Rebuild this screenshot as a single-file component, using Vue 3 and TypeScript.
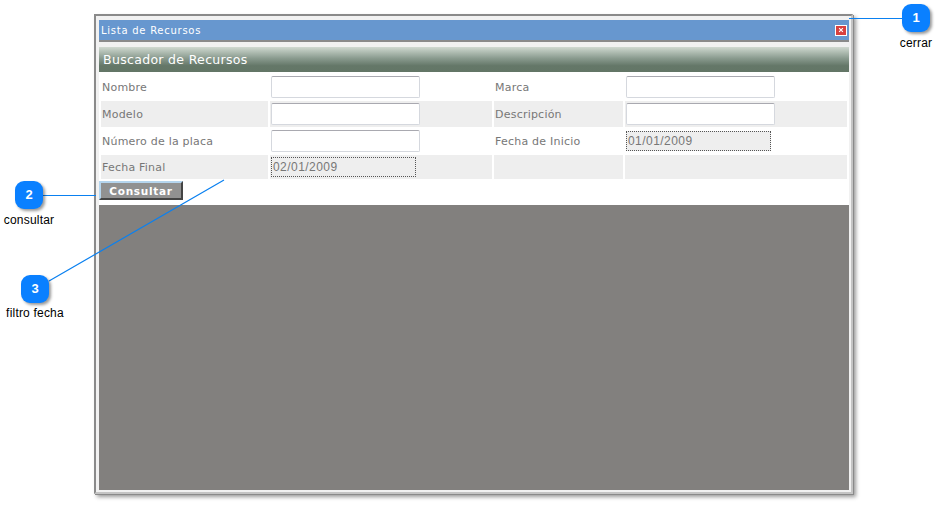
<script setup lang="ts">
interface Callout { n: number; label: string; bx: number; by: number; lx: number; ly: number; lw: number }
const callouts: Callout[] = [
  { n: 1, label: 'cerrar', bx: 902, by: 4, lx: 886, ly: 36, lw: 60 },
  { n: 2, label: 'consultar', bx: 15, by: 181, lx: 0, ly: 213, lw: 58 },
  { n: 3, label: 'filtro fecha', bx: 21, by: 275, lx: 0, ly: 306, lw: 70 },
]
</script>

<template>
  <div class="page">
    <div class="window">
      <div class="titlebar">
        <span>Lista de Recursos</span>
        <span class="close"><svg width="8" height="8" viewBox="0 0 8 8"><path d="M1.5 1.5l5 5M6.5 1.5l-5 5" stroke="#fff" stroke-width="1.5"/></svg></span>
      </div>
      <div class="header">Buscador de Recursos</div>
      <div class="form">
        <div class="cell lbl">Nombre</div>
        <div class="cell"><input class="inp" /></div>
        <div class="cell lbl">Marca</div>
        <div class="cell"><input class="inp" /></div>

        <div class="cell lbl alt">Modelo</div>
        <div class="cell alt"><input class="inp" /></div>
        <div class="cell lbl alt">Descripción</div>
        <div class="cell alt"><input class="inp" /></div>

        <div class="cell lbl">Número de la placa</div>
        <div class="cell"><input class="inp" /></div>
        <div class="cell lbl">Fecha de Inicio</div>
        <div class="cell"><div class="date">01/01/2009</div></div>

        <div class="cell lbl alt">Fecha Final</div>
        <div class="cell alt"><div class="date">02/01/2009</div></div>
        <div class="cell lbl alt"></div>
        <div class="cell alt"></div>
      </div>
      <div class="actions"><button class="btn">Consultar</button></div>
      <div class="results"></div>
    </div>

    <svg class="lines" width="938" height="507">
      <path d="M849 18.5H902M43 195.5H96M49 281L224 180" stroke="#0a80f0" stroke-width="1.2" fill="none"/>
    </svg>
    <template v-for="c in callouts" :key="c.n">
      <div class="badge" :style="{ left: c.bx + 'px', top: c.by + 'px' }">{{ c.n }}</div>
      <div class="cap" :style="{ left: c.lx + 'px', top: c.ly + 'px', width: c.lw + 'px' }">{{ c.label }}</div>
    </template>
  </div>
</template>

<style>
html, body { margin: 0; background: #fff; }
</style>

<style scoped>
.page { position: relative; width: 938px; height: 507px; overflow: hidden; padding: 14px 0 0 94px; box-sizing: border-box; background: #fff; font-family: "DejaVu Sans", sans-serif; }
.window { width: 759px; height: 480px; box-sizing: border-box; border: 2px solid #8a8a8a; border-right-color: #c4c4c4; border-bottom-color: #c4c4c4; background: #f1f1f1; padding: 4px 2px 2px 3px; box-shadow: 1px 1px 0 #8a8a8a, 3px 3px 4px rgba(0,0,0,.4); display: flex; flex-direction: column; }
.titlebar { height: 20px; background: #6797cf; border-bottom: 2px solid #8a8a8a; color: #fff; font-size: 10px; letter-spacing: .74px; padding: 0 2px; display: flex; align-items: center; justify-content: space-between; flex: none; box-sizing: content-box; }
.close { width: 10px; height: 9px; border: 1px solid #fff; background: #d8413f; display: flex; align-items: center; justify-content: center; }
.close svg { width: 6px; height: 6px; }
.header { margin-top: 5px; height: 25px; flex: none; background: linear-gradient(#d0d9d1 0, #b8c4ba 15%, #8a9b8f 45%, #647768 75%, #637666 100%); color: #fff; font-size: 12.5px; letter-spacing: .32px; line-height: 25px; padding-left: 4px; box-sizing: border-box; }
.form { background: #fff; display: grid; grid-template-columns: 167px 222px 129px 222px; grid-template-rows: 28px 26px 28px 24px; column-gap: 2px; padding: 1px 2px 0 2px; flex: none; }
.cell { display: flex; align-items: center; font-size: 11px; color: #777; letter-spacing: .22px; box-sizing: border-box; padding-left: 1px; }
.alt { background: #eee; }
.inp { width: 149px; height: 22px; box-sizing: border-box; border: 1px solid #d5d8de; border-top-color: #a9a9b0; border-radius: 2px; background: #fff; margin: 0; padding: 0; outline: none; }
.date { width: 145px; height: 20px; box-sizing: border-box; border: 1px dotted #555; background: #eee; font-family: "Liberation Sans", sans-serif; font-size: 12px; color: #777; letter-spacing: .45px; line-height: 18px; padding-left: 1px; }
.actions { background: #fff; height: 26px; flex: none; padding-top: 2px; box-sizing: border-box; }
.btn { display: block; width: 84px; height: 19px; box-sizing: border-box; border: 2px solid; border-color: #b5d5ee #444 #444 #b5d5ee; background: #919191; color: #fff; font-family: "DejaVu Sans", sans-serif; font-weight: 700; font-size: 10.5px; letter-spacing: .7px; padding: 0; margin: 0; }
.results { flex: 1; background: #82807e; }
.lines { position: absolute; left: 0; top: 0; pointer-events: none; }
.badge { position: absolute; width: 28px; height: 28px; border-radius: 9px; background: #0a80ff; color: #fff; font: 700 13px/28px "Liberation Sans", sans-serif; text-align: center; box-shadow: 2px 2px 3px rgba(0,0,0,.4); }
.cap { position: absolute; font: 12px/14px "Liberation Sans", sans-serif; letter-spacing: .2px; color: #000; text-align: center; }
</style>
